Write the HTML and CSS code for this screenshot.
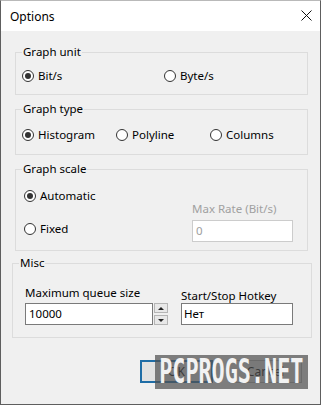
FILE: index.html
```html
<!DOCTYPE html>
<html lang="en">
<head>
    <meta charset="UTF-8">
    <title>Options</title>
    <link rel="stylesheet" href="styles.css">
</head>
<body>
    <div class="window">
        <div class="titlebar">
            <span class="title">Options</span>
            <svg class="close" width="11" height="11" viewBox="0 0 11 11">
                <path d="M0.5 0.5 L10.5 10.5 M10.5 0.5 L0.5 10.5" stroke="#111" stroke-width="1" fill="none"/>
            </svg>
        </div>

        <div class="content">
            <div class="group group-unit">
                <div class="legend">Graph unit</div>
                <div class="row cols-unit">
                    <label class="radio"><span class="circle on"></span>Bit/s</label>
                    <label class="radio"><span class="circle"></span>Byte/s</label>
                </div>
            </div>

            <div class="group group-type">
                <div class="legend">Graph type</div>
                <div class="row cols-type">
                    <label class="radio"><span class="circle on"></span>Histogram</label>
                    <label class="radio"><span class="circle"></span>Polyline</label>
                    <label class="radio"><span class="circle"></span>Columns</label>
                </div>
            </div>

            <div class="group group-scale">
                <div class="legend">Graph scale</div>
                <div class="scale-body">
                    <div class="scale-left">
                        <label class="radio"><span class="circle on"></span>Automatic</label>
                        <label class="radio"><span class="circle"></span>Fixed</label>
                    </div>
                    <div class="scale-right">
                        <div class="label disabled">Max Rate (Bit/s)</div>
                        <div class="field field-disabled">0</div>
                    </div>
                </div>
            </div>

            <div class="group group-misc">
                <div class="legend">Misc</div>
                <div class="misc-body">
                    <div class="misc-left">
                        <div class="label">Maximum queue size</div>
                        <div class="spin-row">
                            <div class="field field-queue">10000</div>
                            <div class="spin">
                                <div class="spin-btn"><span class="tri-up"></span></div>
                                <div class="spin-btn"><span class="tri-down"></span></div>
                            </div>
                        </div>
                    </div>
                    <div class="misc-right">
                        <div class="label">Start/Stop Hotkey</div>
                        <div class="field field-hotkey">Нет</div>
                    </div>
                </div>
            </div>

            <div class="buttons">
                <button class="btn btn-ok">OK</button>
                <button class="btn">Cancel</button>
            </div>
        </div>

        <div class="watermark"><span>PCPROGS.NET</span></div>
    </div>
</body>
</html>
```

FILE: styles.css
```css
body {
    margin: 0;
    background: #ffffff;
    font-family: "Noto Sans", "Open Sans", sans-serif;
    font-size: 11.5px;
    color: #000;
}
.window {
    position: relative;
    width: 321px;
    height: 405px;
    box-sizing: border-box;
    border: 1px solid #5e5e5e;
    border-top-color: #b9b9b9;
    background: #f0f0f0;
    overflow: hidden;
}
.titlebar {
    height: 30px;
    background: #ffffff;
    display: flex;
    align-items: center;
    justify-content: space-between;
    padding: 0 8px 0 9px;
}
.title {
    font-size: 12px;
    line-height: 16px;
    margin-top: 1px;
}
.close {
    display: block;
    margin-top: -1px;
}
.content {
    padding: 21px 12px 0 14px;
}
.group {
    border: 1px solid #dcdcdc;
    padding: 0 6px;
}
.legend {
    width: fit-content;
    margin-top: -9px;
    padding: 0 1px;
    line-height: 16px;
    background: #f0f0f0;
}
.group-unit {
    padding-bottom: 10px;
}
.group-unit .row {
    margin-top: 8px;
}
.group-type {
    margin-top: 14px;
    padding-bottom: 11px;
}
.group-type .row {
    margin-top: 10px;
}
.group-scale {
    margin-top: 14px;
    padding-bottom: 8px;
}
.group-misc {
    margin: 12px -4px 0 -3px;
    padding-bottom: 12px;
}
.row {
    display: grid;
}
.cols-unit {
    grid-template-columns: 142px auto;
}
.cols-type {
    grid-template-columns: 94px 94px auto;
}
.radio {
    display: flex;
    align-items: center;
    gap: 4px;
    line-height: 16px;
}
.circle {
    width: 12px;
    height: 12px;
    box-sizing: border-box;
    border: 1px solid #333;
    border-radius: 50%;
    background: #fff;
    display: flex;
    align-items: center;
    justify-content: center;
}
.circle.on::after {
    content: "";
    width: 6px;
    height: 6px;
    border-radius: 50%;
    background: #333;
}
.scale-body {
    margin-top: 11px;
    display: flex;
    justify-content: space-between;
    align-items: flex-end;
    padding: 0 8px 0 2px;
}
.scale-left {
    display: flex;
    flex-direction: column;
    gap: 17px;
    margin-bottom: 5px;
}
.scale-right {
    width: 101px;
}
.label {
    line-height: 16px;
}
.disabled {
    color: #a0a0a0;
}
.field {
    height: 22px;
    box-sizing: border-box;
    border: 1px solid #7a7a7a;
    background: #fff;
    line-height: 20px;
    padding: 0 3px;
}
.field-disabled {
    margin-top: 3px;
    border-color: #cccccc;
    color: #a0a0a0;
}
.misc-body {
    margin-top: 14px;
    padding-left: 6px;
    display: flex;
    gap: 13px;
}
.misc-left .label {
    margin-bottom: 2px;
}
.misc-right .label {
    margin-top: 3px;
    margin-bottom: -1px;
}
.spin-row {
    display: flex;
    gap: 1px;
}
.field-queue {
    width: 128px;
}
.field-hotkey {
    width: 112px;
    padding-left: 2px;
}
.spin {
    display: flex;
    flex-direction: column;
    justify-content: space-between;
    height: 22px;
    width: 14px;
}
.spin-btn {
    height: 10px;
    box-sizing: border-box;
    border: 1px solid #b5b5b5;
    background: #e8e8e8;
    display: flex;
    align-items: center;
    justify-content: center;
}
.tri-up, .tri-down {
    width: 0;
    height: 0;
    border-left: 3px solid transparent;
    border-right: 3px solid transparent;
}
.tri-up {
    border-bottom: 3px solid #222;
}
.tri-down {
    border-top: 3px solid #222;
}
.buttons {
    display: flex;
    justify-content: flex-end;
    gap: 16px;
    margin-top: 22px;
    padding-right: 6px;
}
.btn {
    width: 73px;
    height: 23px;
    box-sizing: border-box;
    border: 1px solid #adadad;
    background: #e1e1e1;
    font-family: inherit;
    font-size: 12px;
    padding: 0;
}
.btn-ok {
    border: 2px solid #1f6da6;
}
.watermark {
    position: absolute;
    left: 154px;
    top: 354px;
    width: 153px;
    height: 34px;
    background: rgba(80, 80, 80, 0.72);
    display: flex;
    justify-content: center;
    align-items: center;
    overflow: hidden;
}
.watermark span {
    display: inline-block;
    color: #f2f2f2;
    font-family: "DejaVu Sans Mono", monospace;
    font-weight: bold;
    font-size: 33px;
    line-height: 34px;
    white-space: nowrap;
    transform: scaleX(0.66);
}
```
